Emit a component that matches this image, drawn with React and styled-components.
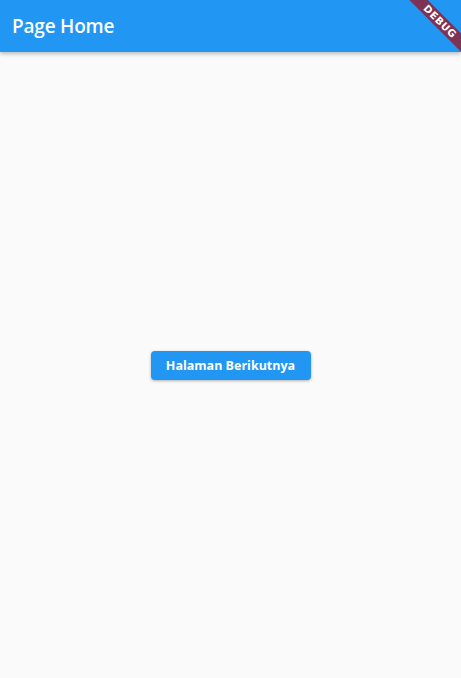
import React from 'react';
import styled, { createGlobalStyle } from 'styled-components';

const GlobalStyle = createGlobalStyle`
    html, body {
        margin: 0;
        padding: 0;
        height: 100%;
        background-color: #fafafa;
        font-family: "Open Sans", "Noto Sans", sans-serif;
    }
    #root {
        height: 100%;
    }
`;

export default function App() {
    return (
        <>
            <GlobalStyle />
            <Root>
                <AppBar>
                    <Title>Page Home</Title>
                </AppBar>
                <Body>
                    <NextButton>Halaman Berikutnya</NextButton>
                </Body>
                <BannerClip>
                    <Banner>DEBUG</Banner>
                </BannerClip>
            </Root>
        </>
    );
}

const Root = styled.div`
    position: relative;
    height: 100%;
    display: flex;
    flex-direction: column;
    overflow: hidden;
`;

const AppBar = styled.header`
    height: 52px;
    flex-shrink: 0;
    display: flex;
    align-items: center;
    padding: 0 12px;
    background-color: #2196f3;
    box-shadow: 0 2px 4px rgba(0, 0, 0, 0.25);
    z-index: 1;
`;

const Title = styled.h1`
    margin: 0;
    color: #fff;
    font-size: 19px;
    font-weight: 600;
    letter-spacing: -0.2px;
`;

const Body = styled.main`
    flex: 1;
    display: flex;
    align-items: center;
    justify-content: center;
`;

const NextButton = styled.button`
    width: 160px;
    height: 29px;
    border: none;
    border-radius: 4px;
    background-color: #2196f3;
    color: #fff;
    font-family: "Open Sans", "Noto Sans", sans-serif;
    font-size: 12.5px;
    font-weight: 700;
    box-shadow: 0 1px 3px rgba(0, 0, 0, 0.3);
    cursor: pointer;
`;

const BannerClip = styled.div`
    position: absolute;
    top: 0;
    right: 0;
    width: 80px;
    height: 80px;
    overflow: hidden;
    pointer-events: none;
    z-index: 2;
`;

const Banner = styled.div`
    position: absolute;
    left: -1px;
    top: 15px;
    width: 120px;
    height: 13px;
    transform: rotate(45deg);
    transform-origin: center;
    background-color: #7e3254;
    color: #fff;
    font-family: "DejaVu Sans", sans-serif;
    font-size: 10px;
    font-weight: 900;
    line-height: 13px;
    text-align: center;
    letter-spacing: 0.6px;
`;
